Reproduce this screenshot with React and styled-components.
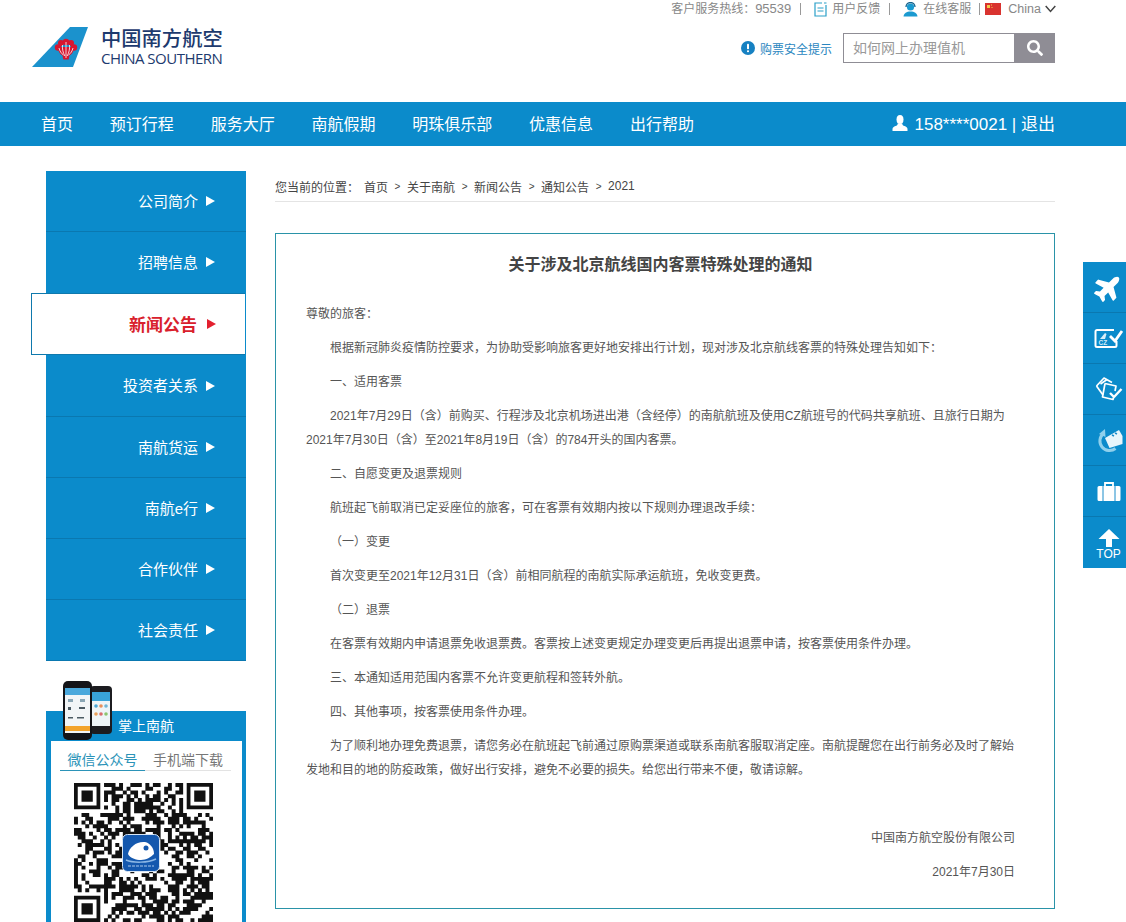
import styled, { createGlobalStyle } from "styled-components";
import { FaPlane, FaSearch } from "react-icons/fa";

const navItems = ["首页", "预订行程", "服务大厅", "南航假期", "明珠俱乐部", "优惠信息", "出行帮助"];
const sideItems = ["公司简介", "招聘信息", "新闻公告", "投资者关系", "南航货运", "南航e行", "合作伙伴", "社会责任"];
const crumbs = ["首页", "关于南航", "新闻公告", "通知公告", "2021"];

// \uFF0C comma, \uFF1A colon, \uFF08 \uFF09 parens: full width forms
const paragraphs = [
  { text: "尊敬的旅客\uFF1A" },
  { text: "根据新冠肺炎疫情防控要求\uFF0C为协助受影响旅客更好地安排出行计划\uFF0C现对涉及北京航线客票的特殊处理告知如下\uFF1A", indent: true },
  { text: "一、适用客票", indent: true },
  { text: "2021年7月29日\uFF08含\uFF09前购买、行程涉及北京机场进出港\uFF08含经停\uFF09的南航航班及使用CZ航班号的代码共享航班、且旅行日期为2021年7月30日\uFF08含\uFF09至2021年8月19日\uFF08含\uFF09的784开头的国内客票。", indent: true },
  { text: "二、自愿变更及退票规则", indent: true },
  { text: "航班起飞前取消已定妥座位的旅客\uFF0C可在客票有效期内按以下规则办理退改手续\uFF1A", indent: true },
  { text: "\uFF08一\uFF09变更", indent: true },
  { text: "首次变更至2021年12月31日\uFF08含\uFF09前相同航程的南航实际承运航班\uFF0C免收变更费。", indent: true },
  { text: "\uFF08二\uFF09退票", indent: true },
  { text: "在客票有效期内申请退票免收退票费。客票按上述变更规定办理变更后再提出退票申请\uFF0C按客票使用条件办理。", indent: true },
  { text: "三、本通知适用范围内客票不允许变更航程和签转外航。", indent: true },
  { text: "四、其他事项\uFF0C按客票使用条件办理。", indent: true },
  { text: "为了顺利地办理免费退票\uFF0C请您务必在航班起飞前通过原购票渠道或联系南航客服取消定座。南航提醒您在出行前务必及时了解始发地和目的地的防疫政策\uFF0C做好出行安排\uFF0C避免不必要的损失。给您出行带来不便\uFF0C敬请谅解。", indent: true },
];

const GlobalStyle = createGlobalStyle`
  html, body {
    margin: 0;
    height: 100%;
    overflow: hidden;
    background: #fff;
  }
  body {
    font-family: "Liberation Sans", "Noto Sans CJK SC", sans-serif;
    font-size: 12px;
    color: #555;
  }
  * {
    box-sizing: border-box;
  }
`;

function TailLogo() {
  return (
    <svg width="58" height="42" viewBox="0 0 58 42">
      <polygon points="0,40 38,0 56,0 41,40" fill="#1b92cd" />
      <g fill="#d8152f">
        <circle cx="34" cy="15" r="3.2" />
        <circle cx="29" cy="16" r="3" />
        <circle cx="39" cy="16" r="3" />
        <circle cx="26" cy="20.500" r="3.200" />
        <circle cx="42" cy="20.500" r="3.200" />
        <path d="M26 20h16c0 5-2.500 7.500-4.500 8.500l-.8 4h-5.400l-.8-4C28.500 27.500 26 25 26 20z" />
      </g>
      <g fill="none" stroke="#fff" strokeWidth="0.800">
        <path d="M34 15v16M30.500 18c-.4 4 .5 7.500 2.300 11M37.500 18c.4 4-.5 7.500-2.300 11M27 21c.8 3 2.200 5.500 4.500 7M41 21c-.8 3-2.200 5.500-4.500 7" />
      </g>
    </svg>
  );
}

function FeedbackIcon() {
  return (
    <svg width="13" height="15" viewBox="0 0 13 15" fill="none" stroke="#2aa0c8" strokeWidth="1.200">
      <path d="M8 1H1v13h11V3" />
      <path d="M10 1h2.500M3.500 6h6M3.500 9h6" />
    </svg>
  );
}

function ServiceIcon() {
  return (
    <svg width="15" height="15" viewBox="0 0 15 15">
      <circle cx="7.500" cy="5" r="3.600" fill="#1b9ad0" />
      <path d="M3 5a4.500 4.500 0 0 1 9 0" fill="none" stroke="#14628c" strokeWidth="1.300" />
      <path d="M0.500 14.500c.5-3.500 3-5 7-5s6.500 1.500 7 5z" fill="#1b9ad0" />
    </svg>
  );
}

function FlagIcon() {
  return (
    <svg width="16" height="12" viewBox="0 0 16 12">
      <rect width="16" height="12" fill="#d9332f" />
      <rect x="2" y="2" width="3" height="3" fill="#f2cf4a" />
      <rect x="6" y="1.500" width="1" height="1" fill="#f2cf4a" />
      <rect x="6.500" y="4" width="1" height="1" fill="#f2cf4a" />
    </svg>
  );
}

function Chevron() {
  return (
    <svg width="11" height="8" viewBox="0 0 11 8" fill="none" stroke="#444" strokeWidth="1.500">
      <path d="M.7 1l4.800 5.400L10.300 1" />
    </svg>
  );
}

function InfoIcon() {
  return (
    <svg width="14" height="14" viewBox="0 0 14 14">
      <circle cx="7" cy="7" r="7" fill="#1681c2" />
      <rect x="6" y="2.800" width="2" height="5.400" rx="0.800" fill="#fff" />
      <rect x="6" y="9.200" width="2" height="2" rx="0.800" fill="#fff" />
    </svg>
  );
}

function UserIcon() {
  return (
    <svg width="16" height="16" viewBox="0 0 16 16" fill="#fff">
      <ellipse cx="8" cy="4.500" rx="3.500" ry="4.500" />
      <path d="M5.800 8.500c-.2 1.500-1 2-2.300 2.600C1.800 11.800.500 12.500.500 14v2h15v-2c0-1.500-1.300-2.200-3-2.900-1.300-.6-2.100-1.100-2.300-2.600z" />
    </svg>
  );
}

function TicketIcon() {
  return (
    <svg width="30" height="22" viewBox="0 0 30 22" fill="none">
      <path d="M20 3H3a1.500 1.500 0 0 0-1.500 1.500v14A1.500 1.500 0 0 0 3 20h18a1.500 1.500 0 0 0 1.500-1.500V14" stroke="#fff" strokeWidth="2" />
      <path d="M16 9l5 5 7-10" stroke="#fff" strokeWidth="2.800" />
      <path d="M6 12l5-6 1.500 1-1.500 5z" fill="#d6edf8" />
      <text x="4.500" y="18" fill="#d6edf8" fontSize="6.500" fontWeight="700" fontFamily="Liberation Sans, sans-serif">CZ</text>
    </svg>
  );
}

function CardsIcon() {
  return (
    <svg width="28" height="26" viewBox="0 0 28 26" fill="none" stroke="#fff" strokeWidth="1.700" strokeLinejoin="round">
      <path d="M1.500 10L9 2l8 4.500" />
      <path d="M1.500 10L8 19" />
      <path d="M5.500 8L12 3.500" />
      <path d="M10 7.500l11 2.500-1 5" />
      <path d="M10 7.500L7.500 21 18 23.500l.6-2" />
      <path d="M15 17l4 4 7.500-8" strokeWidth="2.400" />
    </svg>
  );
}

function RefundIcon() {
  return (
    <svg width="28" height="26" viewBox="0 0 28 26" fill="none">
      <path d="M8.500 6.500a9.500 9.500 0 1 0 12 15" stroke="#8fd0ec" strokeWidth="3" />
      <path d="M10 2l.5 8-6.500-3z" fill="#8fd0ec" />
      <path d="M10 11L24 3l3.500 6v8l-13 4z" fill="#e8f5fb" />
      <path d="M17 8l2 1M20 6l2 1" stroke="#1b8cca" strokeWidth="1.500" />
    </svg>
  );
}

function BagIcon() {
  return (
    <svg width="24" height="20" viewBox="0 0 24 20">
      <path d="M8 5V2h8v3" fill="none" stroke="#fff" strokeWidth="1.800" />
      <path d="M2 5h20a1.500 1.500 0 0 1 1.500 1.500v12a1.500 1.500 0 0 1-1.500 1.500H2a1.500 1.500 0 0 1-1.500-1.500v-12A1.500 1.500 0 0 1 2 5z" fill="#fff" />
      <path d="M6 5v15M18 5v15" stroke="#1b8cca" strokeWidth="1" />
    </svg>
  );
}

function UpArrow() {
  return (
    <svg width="22" height="18" viewBox="0 0 22 18">
      <path d="M11 0l10.500 10H14v8H8v-8H.5z" fill="#fff" />
    </svg>
  );
}

function Phones() {
  return (
    <svg width="50" height="60" viewBox="0 0 50 60">
      <rect x="27" y="5" width="22" height="48" rx="4" fill="#1c1c20" />
      <rect x="29" y="11" width="18" height="34" fill="#eef4f7" />
      <rect x="29" y="11" width="18" height="9" fill="#39a3d8" />
      <circle cx="33" cy="25" r="1.800" fill="#4aa8d8" />
      <circle cx="38" cy="25" r="1.800" fill="#e88f5b" />
      <circle cx="43" cy="25" r="1.800" fill="#6fb5d6" />
      <circle cx="33" cy="33" r="1.800" fill="#e8a05b" />
      <circle cx="38" cy="33" r="1.800" fill="#d96c6c" />
      <circle cx="43" cy="33" r="1.800" fill="#8cc470" />
      <rect x="0" y="0" width="29" height="59" rx="5" fill="#141418" />
      <rect x="2" y="7" width="25" height="45" fill="#f2f5f7" />
      <rect x="2" y="7" width="25" height="7" fill="#4aa8dc" />
      <rect x="5" y="18" width="5" height="3" fill="#8aa6b5" />
      <rect x="17" y="18" width="5" height="3" fill="#8aa6b5" />
      <rect x="5" y="26" width="3" height="3" fill="#4b5a63" />
      <rect x="16" y="26" width="6" height="2" fill="#4b5a63" />
      <rect x="5" y="36" width="5" height="1.500" fill="#4b5a63" />
      <rect x="14" y="36" width="7" height="1.500" fill="#4b5a63" />
      <rect x="2" y="45" width="25" height="5" fill="#f3a32b" />
    </svg>
  );
}

// fake module data, only the finder squares are real
function qrPath(size) {
  let seed = 20210730;
  const next = () => {
    seed = (seed * 1664525 + 1013904223) % 4294967296;
    return seed / 4294967296;
  };
  const inFinder = (x, y) =>
    (x < 8 && y < 8) || (x > size - 9 && y < 8) || (x < 8 && y > size - 9);
  let d = "";
  for (let y = 0; y < size; y++) {
    for (let x = 0; x < size; x++) {
      if (inFinder(x, y)) continue;
      if (next() > 0.48) d += `M${x} ${y}h1.050v1.050h-1.050z`;
    }
  }
  const finder = (x, y) =>
    `M${x} ${y}h7v7h-7zM${x + 1} ${y + 1}v5h5v-5zM${x + 2} ${y + 2}h3v3h-3z`;
  return d + finder(0, 0) + finder(size - 7, 0) + finder(0, size - 7);
}

function QrCode() {
  return (
    <QrWrap>
      <svg width="139" height="139" viewBox="0 0 37 37">
        <path d={qrPath(37)} fill="#111" />
      </svg>
      <QrBadge>
        <svg width="38" height="38" viewBox="0 0 38 38">
          <rect x="0.500" y="0.500" width="37" height="37" rx="5" fill="#1458ae" stroke="#d8e6f5" />
          <path d="M6 20c1-7 9-13 17-12 5 1 9 6 9 12-3 3-8 6-13 6-5 0-11-2-13-6z" fill="#fff" />
          <circle cx="24" cy="14" r="2.500" fill="#1458ae" />
          <path d="M4 26c7 3 22 3 30-1" fill="none" stroke="#8db8e6" strokeWidth="1.500" />
          <path d="M6 32h26" stroke="#a9c8ec" strokeWidth="1" strokeDasharray="3 1" />
        </svg>
      </QrBadge>
    </QrWrap>
  );
}

export default function App() {
  return (
    <Page>
      <GlobalStyle />
      <Header>
        <Logo>
          <TailLogo />
          <LogoText>
            <LogoCn>中国南方航空</LogoCn>
            <LogoEn>CHINA SOUTHERN</LogoEn>
          </LogoText>
        </Logo>
        <HeaderRight>
          <TopLinks>
            <span>
              {"客户服务热线\uFF1A"}
              <Hotline>95539</Hotline>
            </span>
            <Sep />
            <FeedbackIcon />
            <TopLink>用户反馈</TopLink>
            <Sep />
            <ServiceIcon />
            <TopLink>在线客服</TopLink>
            <Sep $tight />
            <FlagIcon />
            <China>China</China>
            <Chevron />
          </TopLinks>
          <SearchRow>
            <InfoIcon />
            <Tips>购票安全提示</Tips>
            <SearchBox>
              <SearchInput placeholder="如何网上办理值机" />
              <SearchButton>
                <FaSearch size={16} color="#fff" />
              </SearchButton>
            </SearchBox>
          </SearchRow>
        </HeaderRight>
      </Header>

      <Nav>
        <NavList>
          {navItems.map((item) => (
            <NavItem key={item}>{item}</NavItem>
          ))}
        </NavList>
        <UserBox>
          <UserIcon />
          <UserText>158****0021 | 退出</UserText>
        </UserBox>
      </Nav>

      <Content>
        <Sidebar>
          <SideMenu>
            {sideItems.map((item) => (
              <SideItem key={item} $active={item === "新闻公告"}>
                {item}
                <Arrow $active={item === "新闻公告"} />
              </SideItem>
            ))}
          </SideMenu>
          <AppCard>
            <PhoneArt>
              <Phones />
            </PhoneArt>
            <AppTitle>掌上南航</AppTitle>
            <AppBody>
              <Tabs>
                <Tab $active>微信公众号</Tab>
                <Tab>手机端下载</Tab>
              </Tabs>
              <QrCode />
            </AppBody>
          </AppCard>
        </Sidebar>

        <Main>
          <Breadcrumb>
            <CrumbLabel>{"您当前的位置\uFF1A"}</CrumbLabel>
            {crumbs.map((c, i) => (
              <Crumb key={c}>
                {i > 0 && <CrumbArrow>&gt;</CrumbArrow>}
                {c}
              </Crumb>
            ))}
          </Breadcrumb>
          <Article>
            <Title>关于涉及北京航线国内客票特殊处理的通知</Title>
            {paragraphs.map((p) => (
              <Para key={p.text} $indent={p.indent}>
                {p.text}
              </Para>
            ))}
            <Signature $first>中国南方航空股份有限公司</Signature>
            <Signature>2021年7月30日</Signature>
          </Article>
        </Main>
      </Content>

      <SideRail>
        <RailItem><Plane size={29} /></RailItem>
        <RailItem><TicketIcon /></RailItem>
        <RailItem><CardsIcon /></RailItem>
        <RailItem><RefundIcon /></RailItem>
        <RailItem><BagIcon /></RailItem>
        <RailItem $top>
          <UpArrow />
          <TopText>TOP</TopText>
        </RailItem>
      </SideRail>
    </Page>
  );
}

const Page = styled.div`
  width: 1126px;
  height: 922px;
  overflow: hidden;
  position: relative;
`;

const Header = styled.div`
  height: 102px;
  display: flex;
  justify-content: space-between;
  padding: 0 71px 0 32px;
`;

const Logo = styled.div`
  display: flex;
  align-items: flex-start;
  gap: 11px;
  padding-top: 27px;
`;

const LogoText = styled.div`
  display: flex;
  flex-direction: column;
  color: #1d3a6e;
`;

const LogoCn = styled.div`
  font-size: 20.300px;
  font-weight: 500;
  line-height: 24px;
  white-space: nowrap;
`;

const LogoEn = styled.div`
  font-family: "Open Sans", sans-serif;
  font-size: 15px;
  line-height: 15px;
  letter-spacing: -0.500px;
  white-space: nowrap;
`;

const HeaderRight = styled.div`
  display: flex;
  flex-direction: column;
  align-items: flex-end;
`;

const TopLinks = styled.div`
  display: flex;
  align-items: center;
  height: 18px;
  margin-right: -1px;
  color: #888;
  white-space: nowrap;
  line-height: 18px;
  svg {
    flex: none;
  }
`;

const Hotline = styled.span`
  font-size: 13px;
`;

const Sep = styled.i`
  width: 1px;
  height: 12px;
  background: #999;
  margin: ${(props) => (props.$tight ? "0 5px 0 8px" : "0 13px 0 9px")};
`;

const TopLink = styled.span`
  margin-left: 5px;
`;

const China = styled.span`
  margin: 0 4px 0 7px;
  font-size: 12.500px;
`;

const SearchRow = styled.div`
  display: flex;
  align-items: center;
  margin-top: 15px;
`;

const Tips = styled.span`
  margin: 0 11px 0 5px;
  color: #2a86c0;
  white-space: nowrap;
`;

const SearchBox = styled.div`
  display: flex;
  width: 212px;
  height: 30px;
`;

const SearchInput = styled.input`
  width: 171px;
  height: 30px;
  border: 1px solid #8f8d95;
  border-right: 0;
  padding: 0 9px;
  font: inherit;
  font-size: 14px;
  outline: none;
  &::placeholder {
    color: #999;
    opacity: 1;
  }
`;

const SearchButton = styled.div`
  width: 41px;
  height: 30px;
  background: #8f8d95;
  display: flex;
  align-items: center;
  justify-content: center;
`;

const Nav = styled.div`
  height: 44px;
  background: #0b8bcb;
  display: flex;
  justify-content: space-between;
  align-items: center;
  padding: 0 71px 3px 41px;
  color: #fff;
`;

const NavList = styled.div`
  display: flex;
  gap: 36.800px;
`;

const NavItem = styled.div`
  font-size: 16px;
  white-space: nowrap;
`;

const UserBox = styled.div`
  display: flex;
  align-items: center;
  gap: 6px;
  white-space: nowrap;
`;

const UserText = styled.span`
  font-size: 17px;
`;

const Content = styled.div`
  display: flex;
  align-items: flex-start;
  padding: 25px 0 0 46px;
`;

const Sidebar = styled.div`
  width: 200px;
  flex: none;
`;

const SideMenu = styled.div`
  background: #0b8bcb;
`;

const SideItem = styled.div`
  height: ${(props) => (props.$active ? "62px" : "61px")};
  display: flex;
  align-items: center;
  justify-content: flex-end;
  padding: 0 31px 2px 0;
  font-size: ${(props) => (props.$active ? "17px" : "15px")};
  font-weight: ${(props) => (props.$active ? 700 : 400)};
  color: ${(props) => (props.$active ? "#d9202c" : "#fff")};
  white-space: nowrap;
  border-bottom: 1px solid #0a78b0;
  ${(props) =>
    props.$active &&
    `
    background: #fff;
    margin: 0 1px 0 -15px;
    border: 1px solid #0f79ad;
    border-right: 0;
    padding-right: 29px;
  `}
  &:nth-child(2) {
    border-bottom-color: transparent;
  }
  &:nth-child(4) {
    height: 62px;
  }
`;

const Arrow = styled.i`
  width: 0;
  height: 0;
  margin: 2px 0 0 ${(props) => (props.$active ? "10px" : "8px")};
  border-style: solid;
  border-width: 5px 0 5px 9px;
  border-color: transparent transparent transparent
    ${(props) => (props.$active ? "#e3202f" : "#fff")};
`;

const AppCard = styled.div`
  position: relative;
  margin-top: 50px;
  width: 200px;
  background: #0b8bcb;
  padding: 0 4px 0 5px;
`;

const PhoneArt = styled.div`
  position: absolute;
  left: 17px;
  top: -30px;
  line-height: 0;
`;

const AppTitle = styled.div`
  height: 30px;
  line-height: 30px;
  padding-left: 67px;
  font-size: 14px;
  color: #fff;
`;

const AppBody = styled.div`
  background: #fff;
  padding: 9px 9px 10px;
  height: 200px;
`;

const Tabs = styled.div`
  display: flex;
  height: 21px;
  margin-right: 2px;
  border-bottom: 1px solid #e3e3e3;
`;

const Tab = styled.div`
  width: ${(props) => (props.$active ? "85px" : "86px")};
  flex: none;
  text-align: center;
  font-size: 14px;
  line-height: 20px;
  height: 21px;
  white-space: nowrap;
  color: ${(props) => (props.$active ? "#2b93b8" : "#777")};
  border-bottom: 1px solid ${(props) => (props.$active ? "#2b93b8" : "transparent")};
`;

const QrWrap = styled.div`
  position: relative;
  width: 139px;
  margin: 12px 0 0 14px;
  line-height: 0;
`;

const QrBadge = styled.div`
  position: absolute;
  left: 48px;
  top: 51px;
`;

const Main = styled.div`
  width: 780px;
  margin-left: 29px;
  flex: none;
`;

const Breadcrumb = styled.div`
  display: flex;
  align-items: center;
  height: 31px;
  border-bottom: 1px solid #e4e4e4;
  color: #444;
  white-space: nowrap;
`;

const CrumbLabel = styled.span`
  margin-right: 5px;
`;

const Crumb = styled.span`
  display: inline-flex;
  align-items: center;
`;

const CrumbArrow = styled.span`
  font-size: 10px;
  width: 19px;
  text-align: center;
`;

const Article = styled.div`
  margin-top: 31px;
  height: 676px;
  border: 1px solid #2a93a8;
  padding: 17px 39px 0 30px;
`;

const Title = styled.h1`
  margin: 0 0 23px;
  font-size: 16px;
  line-height: 28px;
  font-weight: 700;
  color: #444;
  text-align: center;
`;

const Para = styled.p`
  margin: 0 0 10px;
  line-height: 24px;
  text-indent: ${(props) => (props.$indent ? "24px" : "0")};
`;

const Signature = styled.p`
  margin: ${(props) => (props.$first ? "44px" : "0")} 0 10px;
  line-height: 24px;
  text-align: right;
`;

const SideRail = styled.div`
  position: fixed;
  right: 0;
  top: 262px;
  width: 43px;
  background: #0b8bcb;
`;

const RailItem = styled.div`
  height: 51px;
  display: flex;
  flex-direction: column;
  align-items: center;
  justify-content: ${(props) => (props.$top ? "flex-start" : "center")};
  padding: ${(props) => (props.$top ? "12px" : "0")} 0 0 8px;
  color: #fff;
  border-bottom: 1px solid #0a78b0;
  &:last-child {
    border-bottom: 0;
  }
`;

const Plane = styled(FaPlane)`
  transform: rotate(-45deg);
`;

const TopText = styled.span`
  font-size: 12px;
  line-height: 13px;
  margin-top: 1px;
`;
